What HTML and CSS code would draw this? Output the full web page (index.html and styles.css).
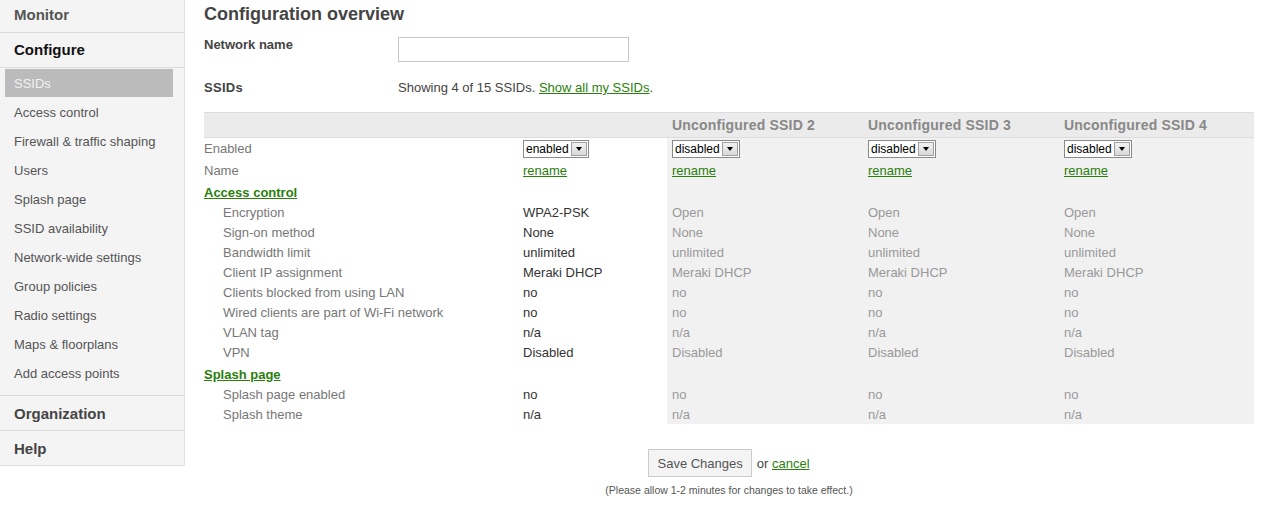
FILE: index.html
```html
<!DOCTYPE html>
<html>
<head>
<meta charset="utf-8">
<title>Configuration overview</title>
<link rel="stylesheet" href="styles.css">
</head>
<body>
<div class="page">
  <nav class="side">
    <div class="sec-head sec-monitor">Monitor</div>
    <div class="sec-head sec-configure">Configure</div>
    <ul class="menu">
      <li class="item selected">SSIDs</li>
      <li class="item">Access control</li>
      <li class="item">Firewall &amp; traffic shaping</li>
      <li class="item">Users</li>
      <li class="item">Splash page</li>
      <li class="item">SSID availability</li>
      <li class="item">Network-wide settings</li>
      <li class="item">Group policies</li>
      <li class="item">Radio settings</li>
      <li class="item">Maps &amp; floorplans</li>
      <li class="item">Add access points</li>
    </ul>
    <div class="sec-head sec-other sec-org">Organization</div>
    <div class="sec-head sec-other">Help</div>
  </nav>

  <main class="main">
    <h1 class="title">Configuration overview</h1>
    <div class="form-row row-name">
      <div class="form-label">Network name</div>
      <div class="form-field"><span class="text-input"></span></div>
    </div>
    <div class="form-row row-ssids">
      <div class="form-label">SSIDs</div>
      <div class="form-field showing">Showing 4 of 15 SSIDs. <a class="link" href="#">Show all my SSIDs</a>.</div>
    </div>

    <table class="grid">
      <colgroup>
        <col class="c-label"><col class="c-1"><col class="c-n"><col class="c-n"><col class="c-last">
      </colgroup>
      <thead>
        <tr><th></th><th></th><th>Unconfigured SSID 2</th><th>Unconfigured SSID 3</th><th>Unconfigured SSID 4</th></tr>
      </thead>
      <tbody>
        <tr class="r-enabled">
          <td class="lab">Enabled</td>
          <td class="v1"><span class="sel"><span class="sel-text">enabled</span><span class="sel-btn"><span class="tri"></span></span></span></td>
          <td class="vx"><span class="sel"><span class="sel-text">disabled</span><span class="sel-btn"><span class="tri"></span></span></span></td>
          <td class="vx"><span class="sel"><span class="sel-text">disabled</span><span class="sel-btn"><span class="tri"></span></span></span></td>
          <td class="vx"><span class="sel"><span class="sel-text">disabled</span><span class="sel-btn"><span class="tri"></span></span></span></td>
        </tr>
        <tr class="r-name">
          <td class="lab">Name</td>
          <td class="v1"><a class="link" href="#">rename</a></td>
          <td class="vx"><a class="link" href="#">rename</a></td>
          <td class="vx"><a class="link" href="#">rename</a></td>
          <td class="vx"><a class="link" href="#">rename</a></td>
        </tr>
        <tr class="r-section">
          <td class="lab"><a class="section-link" href="#">Access control</a></td>
          <td class="v1"></td><td class="vx"></td><td class="vx"></td><td class="vx"></td>
        </tr>
        <tr class="r-data"><td class="lab sub">Encryption</td><td class="v1">WPA2-PSK</td><td class="vx">Open</td><td class="vx">Open</td><td class="vx">Open</td></tr>
        <tr class="r-data"><td class="lab sub">Sign-on method</td><td class="v1">None</td><td class="vx">None</td><td class="vx">None</td><td class="vx">None</td></tr>
        <tr class="r-data"><td class="lab sub">Bandwidth limit</td><td class="v1">unlimited</td><td class="vx">unlimited</td><td class="vx">unlimited</td><td class="vx">unlimited</td></tr>
        <tr class="r-data"><td class="lab sub">Client IP assignment</td><td class="v1">Meraki DHCP</td><td class="vx">Meraki DHCP</td><td class="vx">Meraki DHCP</td><td class="vx">Meraki DHCP</td></tr>
        <tr class="r-data"><td class="lab sub">Clients blocked from using LAN</td><td class="v1">no</td><td class="vx">no</td><td class="vx">no</td><td class="vx">no</td></tr>
        <tr class="r-data"><td class="lab sub">Wired clients are part of Wi-Fi network</td><td class="v1">no</td><td class="vx">no</td><td class="vx">no</td><td class="vx">no</td></tr>
        <tr class="r-data"><td class="lab sub">VLAN tag</td><td class="v1">n/a</td><td class="vx">n/a</td><td class="vx">n/a</td><td class="vx">n/a</td></tr>
        <tr class="r-data"><td class="lab sub">VPN</td><td class="v1">Disabled</td><td class="vx">Disabled</td><td class="vx">Disabled</td><td class="vx">Disabled</td></tr>
        <tr class="r-section2">
          <td class="lab"><a class="section-link" href="#">Splash page</a></td>
          <td class="v1"></td><td class="vx"></td><td class="vx"></td><td class="vx"></td>
        </tr>
        <tr class="r-data"><td class="lab sub">Splash page enabled</td><td class="v1">no</td><td class="vx">no</td><td class="vx">no</td><td class="vx">no</td></tr>
        <tr class="r-data"><td class="lab sub">Splash theme</td><td class="v1">n/a</td><td class="vx">n/a</td><td class="vx">n/a</td><td class="vx">n/a</td></tr>
      </tbody>
    </table>

    <div class="actions">
      <div class="action-line">
        <button class="save" type="button">Save Changes</button>
        <span class="or">or <a class="link" href="#">cancel</a></span>
      </div>
      <div class="note">(Please allow 1-2 minutes for changes to take effect.)</div>
    </div>
  </main>
</div>
</body>
</html>
```

FILE: styles.css
```css
html, body {
  margin: 0;
  padding: 0;
  background: #ffffff;
}

body {
  font-family: "Liberation Sans", Arial, sans-serif;
  font-size: 13px;
  color: #333333;
}

.page {
  display: flex;
  align-items: flex-start;
  width: 1261px;
}

/* ---------- sidebar ---------- */
.side {
  width: 184px;
  flex: none;
  background: #f4f4f4;
  border-right: 1px solid #e2e2e2;
}

.sec-head {
  box-sizing: border-box;
  padding-left: 14px;
  font-weight: bold;
  font-size: 15px;
  border-bottom: 1px solid #dcdcdc;
}

.sec-monitor {
  height: 33px;
  line-height: 29px;
  color: #555555;
}

.sec-configure {
  height: 35px;
  line-height: 34px;
  color: #111111;
}

.sec-other {
  height: 35px;
  padding-top: 1px;
  line-height: 34px;
  color: #444444;
}

.sec-org {
  border-top: 1px solid #dcdcdc;
  height: 36px;
}

.menu {
  list-style: none;
  margin: 0;
  padding: 1px 0 7px 0;
}

.item {
  height: 27px;
  padding-top: 1px;
  line-height: 28px;
  margin: 0 11px 1px 5px;
  padding-left: 9px;
  color: #555555;
  font-size: 13px;
  white-space: nowrap;
}

.item.selected {
  background: #bbbbbb;
  color: #f2f2f2;
}

/* ---------- main ---------- */
.main {
  flex: 1;
  padding: 4px 7px 0 19px;
}

.title {
  margin: 0;
  font-size: 18px;
  line-height: 20px;
  font-weight: bold;
  color: #444444;
}

.form-row {
  display: flex;
  align-items: flex-start;
}

.row-name {
  margin-top: 13px;
}

.row-ssids {
  margin-top: 18px;
}

.form-label {
  width: 194px;
  flex: none;
  font-weight: bold;
  font-size: 13px;
  line-height: 15px;
  color: #444444;
}

.row-ssids .form-label {
  letter-spacing: 0.3px;
}

.text-input {
  display: block;
  box-sizing: border-box;
  width: 231px;
  height: 25px;
  border: 1px solid #c8c8c8;
  background: #ffffff;
}

.showing {
  line-height: 15px;
  color: #444444;
}

.link {
  color: #2a7f0c;
  text-decoration: underline;
}

.section-link {
  color: #2a7f0c;
  font-weight: bold;
  text-decoration: underline;
}

/* ---------- grid ---------- */
.grid {
  margin-top: 17px;
  width: 1050px;
  table-layout: fixed;
  border-collapse: separate;
  border-spacing: 0;
}

.c-label { width: 314px; }
.c-1 { width: 149px; }
.c-n { width: 196px; }
.c-last { width: 195px; }

.grid th {
  height: 24px;
  padding: 0 0 0 5px;
  background: #ebebeb;
  border-top: 1px solid #dddddd;
  border-bottom: 1px solid #dddddd;
  text-align: left;
  font-size: 14px;
  font-weight: bold;
  letter-spacing: 0.2px;
  color: #888888;
  white-space: nowrap;
  vertical-align: middle;
}

.grid td {
  padding: 0;
  line-height: 15px;
  vertical-align: middle;
  white-space: nowrap;
}

.r-enabled td { height: 21px; }
.r-name td { height: 22px; }
.r-section td { height: 19px; }
.r-data td { height: 20px; }
.r-section2 td { height: 20px; }

.r-section td,
.r-section2 td {
  padding-top: 2px;
}

.lab {
  color: #777777;
}

.lab.sub {
  padding-left: 19px !important;
}

.v1 {
  padding-left: 5px !important;
  color: #333333;
}

.vx {
  padding-left: 5px !important;
  background: #f1f1f1;
  color: #999999;
}

/* fake select */
.sel {
  display: inline-flex;
  align-items: center;
  box-sizing: border-box;
  height: 18px;
  border: 1px solid #8a8a8a;
  background: #ffffff;
  vertical-align: middle;
}

.sel-text {
  padding: 0 2px 0 2px;
  font-size: 12px;
  line-height: 14px;
  color: #000000;
}

.sel-btn {
  display: flex;
  align-items: center;
  justify-content: center;
  box-sizing: border-box;
  width: 16px;
  height: 14px;
  margin-right: 1px;
  border: 1px solid #a0a0a0;
  background: linear-gradient(#f2f2f2, #d9d9d9);
}

.tri {
  width: 0;
  height: 0;
  border-left: 3px solid transparent;
  border-right: 3px solid transparent;
  border-top: 4px solid #000000;
  margin-top: 1px;
}

/* ---------- actions ---------- */
.actions {
  margin-top: 25px;
  display: flex;
  flex-direction: column;
  align-items: center;
}

.action-line {
  display: flex;
  align-items: center;
}

.save {
  box-sizing: border-box;
  height: 28px;
  padding: 0 8px;
  border: 1px solid #cccccc;
  background: #f4f4f4;
  font-family: "Liberation Sans", Arial, sans-serif;
  font-size: 13px;
  color: #555555;
  margin: 0;
}

.or {
  margin-left: 5px;
  color: #444444;
  font-size: 13px;
}

.note {
  margin-top: 7px;
  font-size: 10.5px;
  line-height: 12px;
  color: #555555;
}
```
